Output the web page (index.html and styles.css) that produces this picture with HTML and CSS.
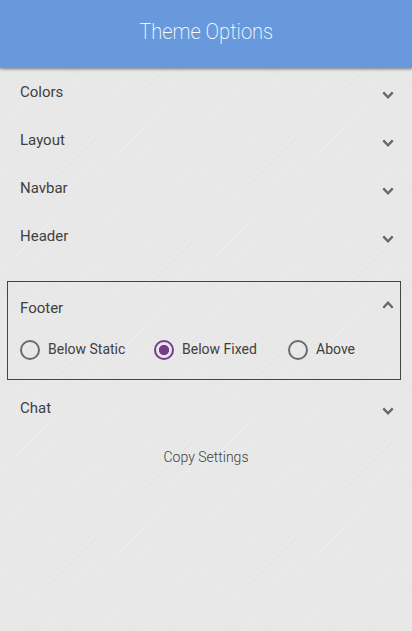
FILE: index.html
```html
<!DOCTYPE html>
<html lang="en">
<head>
<meta charset="utf-8">
<title>Theme Options</title>
<link rel="stylesheet" href="styles.css">
</head>
<body>
<svg class="texture" aria-hidden="true">
  <defs>
    <pattern id="streaks" width="100" height="100" patternUnits="userSpaceOnUse">
      <g fill="none" stroke="#fff" stroke-width="1">
        <path d="M0 73L66 4" opacity=".34"/>
        <path d="M33 98L97 34" opacity=".28"/>
        <path d="M30 65L56 38M70 88L96 62M4 24L22 6M76 24L94 6M12 96L28 80" opacity=".16"/>
      </g>
      <g fill="none" stroke="#000" stroke-width="1">
        <path d="M4 67L64 5M39 94L98 36" opacity=".02"/>
        <path d="M46 68L84 30M62 86L88 60M10 50L38 22M66 32L90 8M4 92L22 74" opacity=".016"/>
      </g>
    </pattern>
  </defs>
  <rect width="100%" height="100%" fill="url(#streaks)"/>
</svg>
<header class="bar"><h1>Theme Options</h1></header>
<main class="options">
  <section class="row"><span>Colors</span><svg class="chevron" viewBox="0 0 12 8"><path d="M1.3 1.4L6 6.4L10.7 1.4"/></svg></section>
  <section class="row"><span>Layout</span><svg class="chevron" viewBox="0 0 12 8"><path d="M1.3 1.4L6 6.4L10.7 1.4"/></svg></section>
  <section class="row"><span>Navbar</span><svg class="chevron" viewBox="0 0 12 8"><path d="M1.3 1.4L6 6.4L10.7 1.4"/></svg></section>
  <section class="row"><span>Header</span><svg class="chevron" viewBox="0 0 12 8"><path d="M1.3 1.4L6 6.4L10.7 1.4"/></svg></section>
  <section class="panel">
    <div class="row open"><span>Footer</span><svg class="chevron" viewBox="0 0 12 8"><path d="M1.3 6.8L6 1.8L10.7 6.8"/></svg></div>
    <div class="choices">
      <label class="choice"><i class="radio"></i><span>Below Static</span></label>
      <label class="choice"><i class="radio checked"></i><span>Below Fixed</span></label>
      <label class="choice"><i class="radio"></i><span>Above</span></label>
    </div>
  </section>
  <section class="row"><span>Chat</span><svg class="chevron" viewBox="0 0 12 8"><path d="M1.3 1.4L6 6.4L10.7 1.4"/></svg></section>
  <div class="copy">Copy Settings</div>
</main>
</body>
</html>
```
FILE: styles.css
```css
* { box-sizing: border-box; }
body {
  margin: 0;
  height: 631px;
  overflow: hidden;
  background: #e8e8e8;
  color: #404040;
  font-family: Roboto, sans-serif;
}
.texture {
  position: absolute;
  inset: 0;
  width: 100%;
  height: 100%;
  z-index: -1;
}
.bar {
  height: 68px;
  display: flex;
  justify-content: center;
  background: rgba(94, 146, 219, .93);
  box-shadow: 0 1px 3px rgba(0, 0, 0, .5);
}
h1 {
  margin: 0;
  color: #fff;
  font-size: 22px;
  line-height: 64px;
  font-weight: 200;
  transform: scaleX(.915);
}
.options { display: flex; flex-direction: column; }
.row {
  height: 48px;
  padding: 0 18px 0 20px;
  display: flex;
  justify-content: space-between;
  align-items: center;
  font-size: 15px;
}
.chevron {
  width: 12px;
  height: 8px;
  margin-top: 6px;
  fill: none;
  stroke: #666;
  stroke-width: 2.3;
  overflow: visible;
}
.panel {
  height: 99px;
  margin: 21px 11px 4px 7px;
  border: 1px solid #444;
}
.panel .row { padding: 0 6px 0 12px; height: 52px; }
.open .chevron { margin-top: -6px; }
.choices {
  display: grid;
  grid-template-columns: 134px 134px auto;
  padding: 6px 0 0 12px;
}
.choice {
  display: flex;
  align-items: center;
  gap: 8px;
  height: 20px;
  font-size: 14px;
  line-height: 18px;
}
.choice span { padding-bottom: 2px; }
.radio {
  width: 20px;
  height: 20px;
  flex: none;
  border: 2px solid #6b6b6b;
  border-radius: 50%;
}
.checked {
  border-color: #733d8c;
  background: radial-gradient(circle, #733d8c 4.8px, transparent 5.4px);
}
.copy {
  margin-top: 15px;
  text-align: center;
  font-size: 14px;
  line-height: 20px;
  font-weight: 300;
}
```
